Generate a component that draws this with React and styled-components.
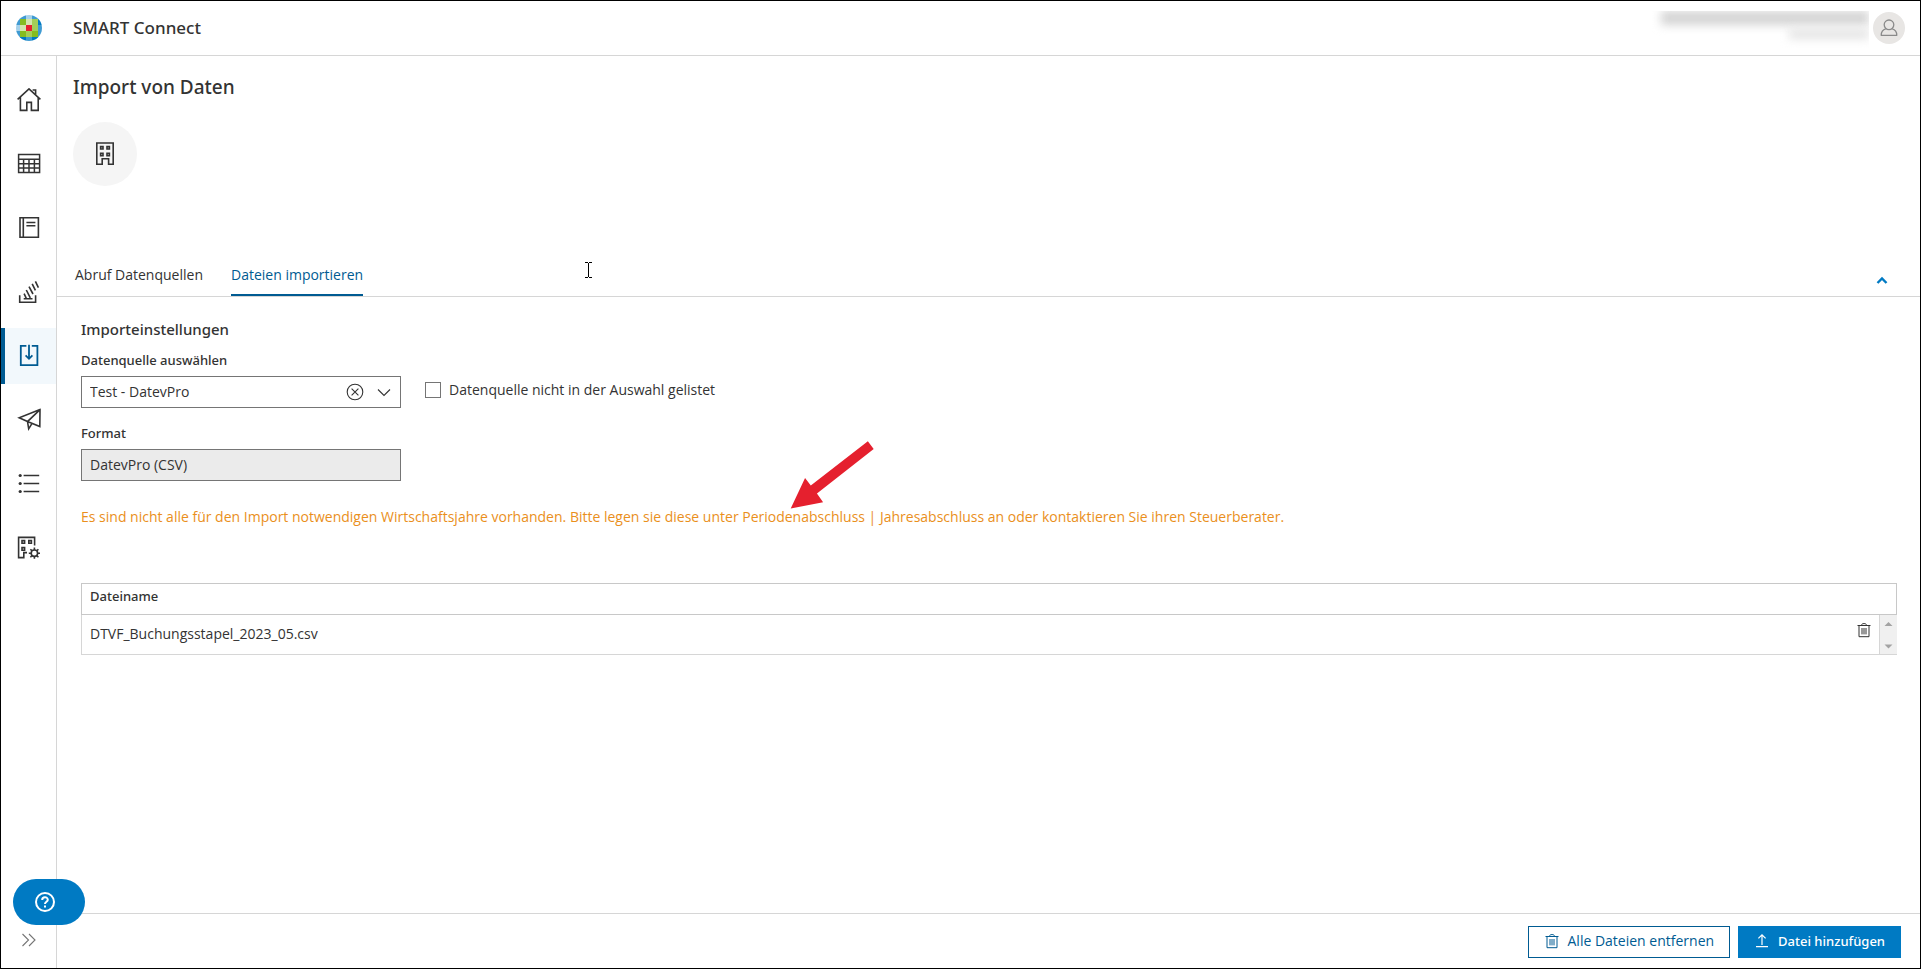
import { useState } from 'react';
import styled, { createGlobalStyle } from 'styled-components';

const GlobalStyle = createGlobalStyle`
  :root {
    --text: #333333;
    --line: #d6d6d6;
    --blue: #007ac3;
    --blue-dark: #005b92;
    --field: #757575;
    --orange: #ea8f1c;
    --medium: 'Noto Sans', 'Open Sans', sans-serif;
  }
  * {
    box-sizing: border-box;
  }
  body {
    margin: 0;
    color: var(--text);
    background: #ffffff;
    font-family: 'Open Sans', 'Noto Sans', sans-serif;
    font-size: 14px;
    line-height: 24px;
  }
  button, input, select {
    font: inherit;
    color: inherit;
  }
  svg {
    display: block;
    flex: none;
  }
`;

/* icons */

const Icon = ({ size = 24, width = 1.6, children }) => (
  <svg
    width={size}
    height={size}
    viewBox={`0 0 ${size} ${size}`}
    fill="none"
    stroke="currentColor"
    strokeWidth={width}
    aria-hidden="true"
  >
    {children}
  </svg>
);

const HomeIcon = () => (
  <Icon>
    <path d="M.6 11.4 12 .9l11.4 10.5M3.4 9v13.4h6.4v-8h4.6v8h6.8V9" />
    <path d="M15.6 2h3v4.4" />
  </Icon>
);

const TableIcon = () => (
  <Icon width={1.5}>
    <path d="M1.6 2.6h21v17.8h-21zM1.6 7.3h21M1.6 11.7h21M1.6 16.1h21M6.6 7.3v13M12 7.3v13M17.4 7.3v13" />
  </Icon>
);

const BookIcon = () => (
  <Icon>
    <path d="M3 1.8h18.4v19.4H3zM6.3 1.8v19.4M9.4 6.5h9M9.4 9.8h9" />
  </Icon>
);

const StackIcon = () => (
  <Icon>
    <path d="M2.7 15.2v7.1h15.9v-7.1M6.7 18.8h8.8M7.1 13.6l2.4 5.2M9.3 10l4 7.8M12 6.6l4 7.4M15.2 3.8l3.2 6.6M18.4 1.4l3 6.2" />
  </Icon>
);

const ImportIcon = () => (
  <Icon width={1.8}>
    <path d="M9.4 1.8H3.8v19.4h16.6V1.8h-5.6M12 .8v14M8.6 11.4l3.4 3.4 3.4-3.4" />
  </Icon>
);

const SendIcon = () => (
  <Icon>
    <path d="M23 1.6 2.2 9.8l8.3 3.8L22.8 18.6zM23 1.6 10.5 13.6l1.2 7.2 3.2-5.2" />
  </Icon>
);

const ListIcon = () => (
  <Icon width={1.4}>
    <path d="M6.6 3.5h15.6M6.6 11.5h15.6M6.6 19.5h15.6" />
    <g fill="currentColor" stroke="none">
      <circle cx="3.2" cy="3.5" r="1.6" />
      <circle cx="3.2" cy="11.5" r="1.6" />
      <circle cx="3.2" cy="19.5" r="1.6" />
    </g>
  </Icon>
);

const CompanySettingsIcon = () => (
  <Icon>
    <path d="M17.6 9.6V1.4H1.6v20.2h5.2v-5H10M5 4.6h2.6v2.6H5zM11.8 4.6h2.6v2.6h-2.6zM5 11.6h2.6v2.6H5z" />
    <circle cx="17.4" cy="17.2" r="3.2" />
    <path d="M17.4 14v-2.4M17.4 20.4v2.4M14.2 17.2h-2.4M20.6 17.2H23M15.1 14.9l-1.7-1.7M19.7 14.9l1.7-1.7M15.1 19.5l-1.7 1.7M19.7 19.5l1.7 1.7" />
  </Icon>
);

const CompanyIcon = () => (
  <Icon>
    <path d="M3.8 1h16.4v21.2h-4.6v-5.4H9.2v5.4H3.8zM7.6 4.6h2.4v2.4H7.6zM14 4.6h2.4v2.4H14zM7.6 11.4h2.4v2.4H7.6zM14 11.4h2.4v2.4H14z" />
  </Icon>
);

const TrashIcon = () => (
  <Icon size={16} width={1}>
    <path d="M1.5 3.5h13M3 3.5v11.2h10V3.5M5.5 3.2c0-2.2 5-2.2 5 0M6 6v6.4M8 6v6.4M10 6v6.4" />
  </Icon>
);

const UploadIcon = () => (
  <Icon size={16} width={1.2}>
    <path d="M8 12V2M4.4 5.4 8 1.8l3.6 3.6M2 13.6h12" />
  </Icon>
);

const TILES = [
  '#007ac3 #409bd2 #a6d1ea #409bd2 #007ac3',
  '#409bd2 #85bc20 #d3e6ad #a4cd58 #007ac3',
  '#a6d1ea #d3e6ad #e5202e #a4cd58 #409bd2',
  '#409bd2 #85bc20 #a4cd58 #85bc20 #409bd2',
  '#007ac3 #007ac3 #409bd2 #007ac3 #007ac3',
].map((row) => row.split(' '));
const TILE_EDGES = [0, 4, 10, 16, 22, 26];

const Logo = () => (
  <svg width="26" height="26" viewBox="0 0 26 26" role="img" aria-label="Logo">
    <clipPath id="globe">
      <circle cx="13" cy="13" r="13" />
    </clipPath>
    <g clipPath="url(#globe)">
      {TILES.map((row, y) =>
        row.map((fill, x) => (
          <rect
            key={`${x}-${y}`}
            x={TILE_EDGES[x]}
            y={TILE_EDGES[y]}
            width={TILE_EDGES[x + 1] - TILE_EDGES[x]}
            height={TILE_EDGES[y + 1] - TILE_EDGES[y]}
            fill={fill}
          />
        ))
      )}
    </g>
  </svg>
);

const navItems = [
  { label: 'Startseite', icon: HomeIcon },
  { label: 'Tabellen', icon: TableIcon },
  { label: 'Journal', icon: BookIcon },
  { label: 'Stapel', icon: StackIcon },
  { label: 'Import', icon: ImportIcon },
  { label: 'Senden', icon: SendIcon },
  { label: 'Liste', icon: ListIcon },
  { label: 'Firmeneinstellungen', icon: CompanySettingsIcon },
];

const tabs = ['Abruf Datenquellen', 'Dateien importieren'];

export default function App() {
  const [activeTab, setActiveTab] = useState(1);
  const [files, setFiles] = useState(['DTVF_Buchungsstapel_2023_05.csv']);
  const [unlisted, setUnlisted] = useState(false);

  return (
    <>
      <GlobalStyle />
      <Shell>
        <Header>
          <LogoCell>
            <Logo />
          </LogoCell>
          <Brand>SMART Connect</Brand>
          <UserName aria-hidden="true">
            <BlurredLine $width={208} $height={14} $tone="#d4d4d4" />
            <BlurredLine $width={80} $height={10} $tone="#e4e4e4" />
          </UserName>
          <Avatar aria-label="Benutzer">
            <Icon size={18} width={1.3}>
              <circle cx="9" cy="5.8" r="4.8" />
              <path d="M1.2 16.4c0-4 2-6 4.6-6.6M16.8 16.4c0-4-2-6-4.6-6.6M.8 16.4h16.4" />
            </Icon>
          </Avatar>
        </Header>

        <Body>
          <Sidebar>
            {navItems.map(({ label, icon: NavIcon }) => (
              <NavLink href="#" key={label} aria-label={label} $active={label === 'Import'}>
                <NavIcon />
              </NavLink>
            ))}
            <ExpandButton aria-label="Menü ausklappen">
              <Icon size={16} width={1.1}>
                <path d="M1.5 2 7.5 8l-6 6M8 2l6 6-6 6" />
              </Icon>
            </ExpandButton>
          </Sidebar>

          <Main>
            <PageHead>
              <h1>Import von Daten</h1>
              <CompanyBadge>
                <CompanyIcon />
              </CompanyBadge>
            </PageHead>

            <TabBar>
              {tabs.map((tab, i) => (
                <Tab key={tab} $active={i === activeTab} onClick={() => setActiveTab(i)}>
                  {tab}
                </Tab>
              ))}
              <CollapseButton aria-label="Einklappen">
                <Icon size={12} width={2.4}>
                  <path d="M1.5 9 6 4.5 10.5 9" />
                </Icon>
              </CollapseButton>
              <TextCursor width="7" height="16" viewBox="0 0 7 16" aria-hidden="true">
                <path d="M0 .5h3M4 .5h3M3.5 1v14M0 15.5h3M4 15.5h3" stroke="#000" fill="none" />
              </TextCursor>
            </TabBar>

            <Content>
              <h2>Importeinstellungen</h2>
              <Label htmlFor="source">Datenquelle auswählen</Label>
              <SourceRow>
                <SelectBox>
                  <select id="source" defaultValue="Test - DatevPro">
                    <option>Test - DatevPro</option>
                  </select>
                  <ClearButton aria-label="Auswahl löschen">
                    <Icon size={18} width={1.1}>
                      <circle cx="9" cy="9" r="7.8" />
                      <path d="M5.6 5.6l6.8 6.8M12.4 5.6l-6.8 6.8" />
                    </Icon>
                  </ClearButton>
                  <Icon size={14} width={1.1}>
                    <path d="M1 4.5l6 6 6-6" />
                  </Icon>
                </SelectBox>
                <CheckLabel>
                  <input
                    type="checkbox"
                    checked={unlisted}
                    onChange={(e) => setUnlisted(e.target.checked)}
                  />
                  Datenquelle nicht in der Auswahl gelistet
                </CheckLabel>
              </SourceRow>
              <Label htmlFor="format">Format</Label>
              <FormatInput id="format" value="DatevPro (CSV)" disabled readOnly />

              <Warning>
                Es sind nicht alle für den Import notwendigen Wirtschaftsjahre vorhanden. Bitte
                legen sie diese unter Periodenabschluss | Jahresabschluss an oder kontaktieren Sie
                ihren Steuerberater.
                <Pointer width="84" height="68" viewBox="0 0 82 66" aria-hidden="true">
                  <path d="M.7 65.7 14.7 36l5.6 7.3L76 0l5.7 7.7L26.3 51l6 8.7z" fill="#e5202e" />
                </Pointer>
              </Warning>

              <FileTable>
                <thead>
                  <tr>
                    <th colSpan={3}>Dateiname</th>
                  </tr>
                </thead>
                <tbody>
                  {files.map((file) => (
                    <tr key={file}>
                      <td>{file}</td>
                      <ActionCell>
                        <DeleteButton
                          aria-label={`${file} entfernen`}
                          onClick={() => setFiles(files.filter((f) => f !== file))}
                        >
                          <TrashIcon />
                        </DeleteButton>
                      </ActionCell>
                      <ScrollCell aria-hidden="true">
                        <svg width="17" height="39" viewBox="0 0 17 39" fill="#a3a3a3">
                          <path d="M4.5 11 8.5 7l4 4zM4.5 29.5l4 4 4-4z" />
                        </svg>
                      </ScrollCell>
                    </tr>
                  ))}
                </tbody>
              </FileTable>
            </Content>

            <Footer>
              <ActionButton onClick={() => setFiles([])}>
                <TrashIcon />
                Alle Dateien entfernen
              </ActionButton>
              <ActionButton $primary>
                <UploadIcon />
                Datei hinzufügen
              </ActionButton>
            </Footer>
          </Main>
        </Body>

        <HelpButton aria-label="Hilfe">
          <Icon size={20} width={2}>
            <circle cx="10" cy="10" r="9" />
            <path d="M7.2 8c0-3.6 5.6-3.4 5.6-.2 0 2-2.8 2-2.8 4.2M10 13.4v2" />
          </Icon>
        </HelpButton>
      </Shell>
    </>
  );
}

const PlainButton = styled.button`
  display: flex;
  align-items: center;
  justify-content: center;
  padding: 0;
  border: none;
  background: none;
  cursor: pointer;
`;

const Shell = styled.div`
  display: flex;
  flex-direction: column;
  min-height: 100vh;
  border: 1px solid #000000;
`;

const Header = styled.header`
  display: flex;
  align-items: center;
  height: 55px;
  padding-right: 15px;
  border-bottom: 1px solid var(--line);
`;

const LogoCell = styled.div`
  display: flex;
  justify-content: center;
  width: 56px;
`;

const Brand = styled.div`
  margin-left: 16px;
  font: 500 17px/24px var(--medium);
`;

const UserName = styled.div`
  display: flex;
  flex-direction: column;
  align-items: flex-end;
  gap: 4px;
  height: 37px;
  width: 232px;
  margin: 2px 4px 0 auto;
  overflow: hidden;
`;

const BlurredLine = styled.span`
  flex: none;
  width: ${(p) => p.$width}px;
  height: ${(p) => p.$height}px;
  background: ${(p) => p.$tone};
  filter: blur(5px);
`;

const Avatar = styled(PlainButton)`
  width: 32px;
  height: 32px;
  border-radius: 50%;
  background: #e8e6e4;
  color: #8a8a8a;
`;

const Body = styled.div`
  display: flex;
  flex: 1;
`;

const Sidebar = styled.nav`
  display: flex;
  flex-direction: column;
  gap: 8px;
  width: 56px;
  padding: 16px 0;
  border-right: 1px solid var(--line);
`;

const NavLink = styled.a`
  display: flex;
  align-items: center;
  justify-content: center;
  height: 56px;
  color: ${(p) => (p.$active ? 'var(--blue-dark)' : 'var(--text)')};
  background: ${(p) => (p.$active ? '#f2f8fc' : 'none')};
  box-shadow: ${(p) => (p.$active ? 'inset 4px 0 0 var(--blue-dark)' : 'none')};
`;

const ExpandButton = styled(PlainButton)`
  height: 24px;
  margin-top: auto;
  color: var(--field);
`;

const Main = styled.main`
  display: flex;
  flex: 1;
  flex-direction: column;
  min-width: 0;
`;

const PageHead = styled.div`
  padding: 16px 16px 77px;
  h1 {
    margin: 0 0 20px;
    font: 500 19px/30px var(--medium);
  }
`;

const CompanyBadge = styled.div`
  display: flex;
  align-items: center;
  justify-content: center;
  width: 64px;
  height: 64px;
  border-radius: 50%;
  background: #f5f5f5;
`;

const TabBar = styled.div`
  position: relative;
  display: flex;
  gap: 28px;
  padding: 0 32px 0 18px;
  border-bottom: 1px solid var(--line);
`;

const Tab = styled(PlainButton)`
  padding-bottom: 7px;
  border-bottom: 2px solid ${(p) => (p.$active ? 'var(--blue-dark)' : 'transparent')};
  color: ${(p) => (p.$active ? 'var(--blue-dark)' : 'inherit')};
`;

const CollapseButton = styled(PlainButton)`
  margin-left: auto;
  color: var(--blue);
`;

const TextCursor = styled.svg`
  position: absolute;
  top: -1px;
  left: 528px;
`;

const Content = styled.section`
  flex: 1;
  padding: 20px 23px 24px 24px;
  h2 {
    margin: 0 0 4px;
    font: 500 15px/24px var(--medium);
  }
`;

const Label = styled.label`
  display: block;
  padding-bottom: 1px;
  font: 500 13px/30px var(--medium);
`;

const SourceRow = styled.div`
  display: flex;
  gap: 24px;
  margin-bottom: 10px;
`;

const SelectBox = styled.div`
  display: flex;
  align-items: center;
  width: 320px;
  height: 32px;
  padding-right: 9px;
  border: 1px solid var(--field);
  select {
    flex: 1;
    padding: 0 8px;
    border: none;
    outline: none;
    background: none;
    appearance: none;
  }
`;

const ClearButton = styled(PlainButton)`
  margin-right: 13px;
`;

const CheckLabel = styled.label`
  display: flex;
  align-items: center;
  gap: 8px;
  height: 28px;
  input {
    width: 16px;
    height: 16px;
    margin: 0;
    border: 1px solid var(--field);
    appearance: none;
    &:checked {
      background: var(--blue);
    }
  }
`;

const FormatInput = styled.input`
  display: block;
  width: 320px;
  height: 32px;
  padding: 0 8px 2px;
  border: 1px solid var(--field);
  border-radius: 0;
  background: #ebebeb;
`;

const Warning = styled.p`
  position: relative;
  margin: 24px 0 54px;
  color: var(--orange);
`;

const Pointer = styled.svg`
  position: absolute;
  top: -64px;
  left: 709px;
`;

const FileTable = styled.table`
  width: 100%;
  border-collapse: collapse;
  th,
  td {
    padding: 0 8px;
    border: 1px solid #c8c8c8;
    text-align: left;
  }
  th {
    height: 31px;
    padding-bottom: 6px;
    font: 500 13px/24px var(--medium);
  }
  td {
    height: 40px;
    padding-bottom: 2px;
    border-color: var(--line);
    border-right: none;
  }
`;

const ActionCell = styled.td`
  && {
    width: 31px;
    padding-right: 7px;
    border-left: none;
  }
`;

const DeleteButton = styled(PlainButton)`
  margin-bottom: 8px;
`;

const ScrollCell = styled.td`
  && {
    width: 17px;
    padding: 0;
    background: #f0f0f0;
  }
`;

const Footer = styled.footer`
  display: flex;
  justify-content: flex-end;
  gap: 8px;
  padding: 12px 19px 10px;
  border-top: 1px solid var(--line);
`;

const ActionButton = styled(PlainButton)`
  gap: 8px;
  height: 32px;
  padding: 0 15px 2px;
  border: 1px solid ${(p) => (p.$primary ? 'var(--blue)' : 'var(--blue-dark)')};
  background: ${(p) => (p.$primary ? 'var(--blue)' : '#ffffff')};
  color: ${(p) => (p.$primary ? '#ffffff' : 'var(--blue-dark)')};
  font: ${(p) => (p.$primary ? '500 13px/24px var(--medium)' : 'inherit')};
`;

const HelpButton = styled(PlainButton)`
  position: fixed;
  left: 13px;
  bottom: 44px;
  width: 72px;
  height: 46px;
  padding-right: 8px;
  border-radius: 23px;
  background: var(--blue);
  color: #ffffff;
`;
